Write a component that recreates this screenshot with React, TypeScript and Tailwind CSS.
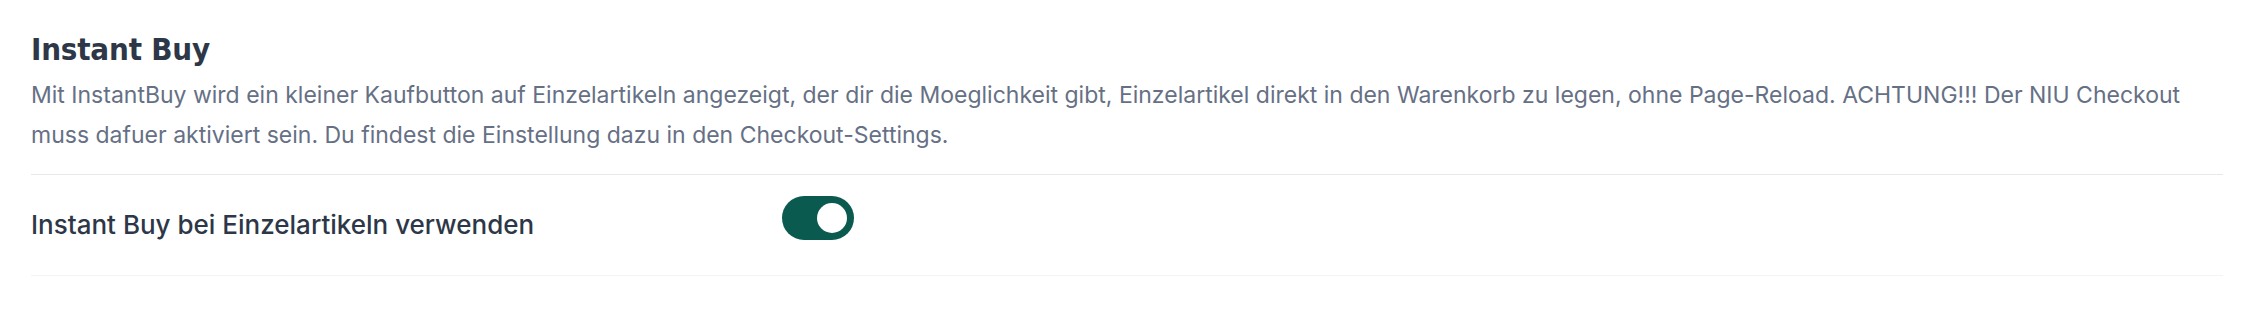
import { useState } from "react";

const Toggle = ({ on, onChange }: { on: boolean; onChange: (v: boolean) => void }) => (
  <button
    type="button"
    role="switch"
    aria-checked={on}
    onClick={() => onChange(!on)}
    className={`relative inline-flex h-[44px] w-[72px] shrink-0 items-center rounded-full transition-colors ${
      on ? "bg-[#0a5a4f]" : "bg-[#e5e7eb]"
    }`}
  >
    <span
      className={`inline-block h-[30px] w-[30px] rounded-full bg-white transition-transform ${
        on ? "translate-x-[35px]" : "translate-x-[7px]"
      }`}
    />
  </button>
);

export default function App() {
  const [instantBuy, setInstantBuy] = useState(true);

  return (
    <div className="min-h-screen bg-white pt-[31px] pl-[31px] pr-[23px] font-['Inter','Liberation_Sans',sans-serif]">
      <h2 className="text-[31px] leading-[36px] font-bold text-[#2d3748] tracking-[-0.2px] font-['DejaVu_Sans_Condensed','DejaVu_Sans',sans-serif] [font-stretch:condensed]">
        Instant Buy
      </h2>
      <p className="mt-[8px] text-[23px] leading-[40px] text-[#667085]">
        Mit InstantBuy wird ein kleiner Kaufbutton auf Einzelartikeln angezeigt, der dir die Moeglichkeit gibt,
        Einzelartikel direkt in den Warenkorb zu legen, ohne Page-Reload. ACHTUNG!!! Der NIU Checkout muss dafuer
        aktiviert sein. Du findest die Einstellung dazu in den Checkout-Settings.
      </p>

      <div className="mt-[19px] border-t border-[#e5e7eb]">
        <div className="flex items-start pt-[21px] pb-[32px] border-b border-[#f3f4f6]">
          <label className="w-[751px] shrink-0 pt-[11px] text-[26px] leading-[36px] font-medium text-[#2d3748]">
            Instant Buy bei Einzelartikeln verwenden
          </label>
          <Toggle on={instantBuy} onChange={setInstantBuy} />
        </div>
      </div>
    </div>
  );
}
